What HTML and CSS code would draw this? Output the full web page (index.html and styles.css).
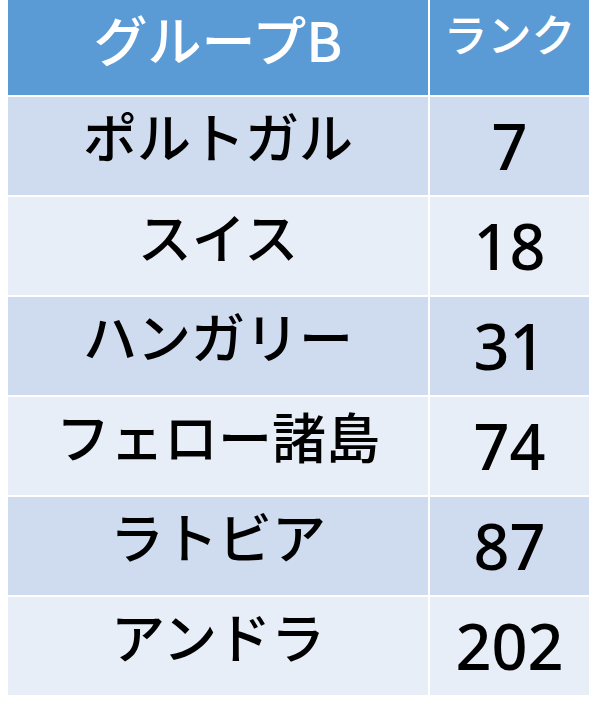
FILE: index.html
```html
<!DOCTYPE html>
<html lang="ja">
<head>
<meta charset="utf-8">
<link rel="stylesheet" href="styles.css">
</head>
<body>
<div class="table">
  <div class="cell head name">グループB</div>
  <div class="cell head rank">ランク</div>

  <div class="cell odd name">ポルトガル</div>
  <div class="cell odd num">7</div>

  <div class="cell even name">スイス</div>
  <div class="cell even num">18</div>

  <div class="cell odd name">ハンガリー</div>
  <div class="cell odd num">31</div>

  <div class="cell even name">フェロー諸島</div>
  <div class="cell even num">74</div>

  <div class="cell odd name">ラトビア</div>
  <div class="cell odd num">87</div>

  <div class="cell even name">アンドラ</div>
  <div class="cell even num">202</div>
</div>
</body>
</html>
```
FILE: styles.css
```css
html, body {
  margin: 0;
  padding: 0;
  background: #ffffff;
}
body {
  padding-left: 8px;
  font-family: "Noto Sans CJK JP", "Noto Sans", sans-serif;
}
.table {
  display: grid;
  grid-template-columns: 420px 159px;
  grid-template-rows: 95px repeat(6, 98px);
  gap: 2px;
  width: 581px;
}
.cell {
  display: flex;
  align-items: center;
  justify-content: center;
  box-sizing: border-box;
  color: #000;
  white-space: nowrap;
  line-height: 1.2;
}
.head {
  background: #5b9bd5;
  color: #ffffff;
  font-size: 44px;
  font-weight: 500;
  align-items: flex-start;
  padding-top: 7px;
}
.odd {
  background: #cfdbef;
}
.even {
  background: #e8eef8;
}
.name {
  font-size: 54px;
}
.odd.name, .even.name {
  font-weight: 500;
  padding-bottom: 20px;
}
.num {
  font-family: "Noto Sans", "Open Sans", sans-serif;
  font-size: 63px;
  font-weight: 500;
}
```
